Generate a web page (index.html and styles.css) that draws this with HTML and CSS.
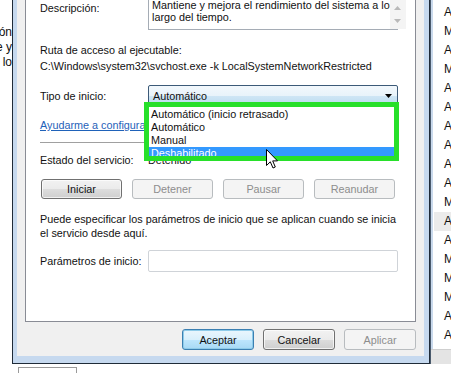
FILE: index.html
```html
<!DOCTYPE html>
<html lang="es">
<head>
  <meta charset="UTF-8">
  <meta name="viewport" content="width=device-width, initial-scale=1.0">
  <title>Propiedades del servicio</title>
  <link rel="stylesheet" href="styles.css">
</head>
<body>
  <div class="screen">
    <div class="top">
      <div class="bg-left">
        <div class="frag"><span>ón</span></div>
        <div class="frag"><span>e y</span></div>
        <div class="frag"><span>lo</span></div>
      </div>

      <div class="dialog">
        <div class="dialog-body">
          <div class="tab-panel">
            <div class="row desc-row">
              <span class="label">Descripción:</span>
              <div class="desc-box">
                <p>Mantiene y mejora el rendimiento del sistema a lo<br>largo del tiempo.</p>
                <div class="vscroll">
                  <svg width="7" height="4" viewBox="0 0 7 4"><path d="M3.5 0L7 4H0z" fill="#b9b9b9"/></svg>
                  <svg width="7" height="4" viewBox="0 0 7 4"><path d="M0 0h7L3.5 4z" fill="#b9b9b9"/></svg>
                </div>
              </div>
            </div>

            <div class="path-block">
              <div>Ruta de acceso al ejecutable:</div>
              <div>C:\Windows\system32\svchost.exe -k LocalSystemNetworkRestricted</div>
            </div>

            <div class="row start-row">
              <span class="label">Tipo de inicio:</span>
              <div class="combo">
                <span>Automático</span>
                <svg width="7" height="4" viewBox="0 0 7 4"><path d="M0 0h7L3.5 4z" fill="#000"/></svg>
              </div>
              <ul class="dropdown">
                <li>Automático (inicio retrasado)</li>
                <li>Automático</li>
                <li>Manual</li>
                <li class="selected">Deshabilitado</li>
              </ul>
              <div class="mark"></div>
              <svg class="cursor" width="12" height="20" viewBox="0 0 12 20">
                <path d="M0.5 0.5V16.5L4.3 12.8L7 19L9.3 18L6.7 11.9H11.5Z" fill="#fff" stroke="#000" stroke-width="1" stroke-linejoin="round"/>
              </svg>
            </div>

            <a class="help-link" href="#">Ayudarme a configurar las opciones de inicio del servicio.</a>
            <div class="sep"></div>

            <div class="row state-row">
              <span class="label">Estado del servicio:</span>
              <span>Detenido</span>
            </div>

            <div class="svc-buttons">
              <button class="btn">Iniciar</button>
              <button class="btn" disabled>Detener</button>
              <button class="btn" disabled>Pausar</button>
              <button class="btn" disabled>Reanudar</button>
            </div>

            <p class="hint">Puede especificar los parámetros de inicio que se aplican cuando se inicia<br>el servicio desde aquí.</p>

            <div class="row param-row">
              <span class="label">Parámetros de inicio:</span>
              <div class="text-input"></div>
            </div>
          </div>

          <div class="dialog-buttons">
            <button class="btn btn-default">Aceptar</button>
            <button class="btn">Cancelar</button>
            <button class="btn" disabled>Aplicar</button>
          </div>
        </div>
      </div>

      <div class="bg-right">
        <ul class="letters">
          <li>A</li><li>M</li><li>A</li><li>M</li><li>A</li><li>A</li>
          <li>A</li><li>A</li><li>A</li><li>A</li><li>M</li><li class="hl">A</li>
          <li>A</li><li>M</li><li>M</li><li>M</li><li>A</li><li>A</li>
        </ul>
        <div class="hscroll"></div>
      </div>
    </div>
    <div class="bottom">
      <div class="mini-tab"></div>
    </div>
  </div>
</body>
</html>
```

FILE: styles.css
```css
body {
  margin: 0;
  font-family: "Liberation Sans", Arial, sans-serif;
  font-size: 10.8px;
  color: #111;
}
.screen {
  width: 451px;
  height: 373px;
  overflow: hidden;
  background: #fff;
}
.top {
  display: flex;
  height: 364px;
}
.bg-left {
  width: 12px;
  flex: none;
  overflow: hidden;
  padding-top: 25px;
  line-height: 15px;
  font-size: 12px;
}
.frag {
  display: flex;
  justify-content: flex-end;
  white-space: nowrap;
}
.frag span {
  flex: none;
}
.dialog {
  width: 418px;
  flex: none;
  box-sizing: border-box;
  border: 1px solid #1f2b38;
  border-top: none;
  background: #c6d9ef;
  padding: 0 5px 6px 4px;
}
.dialog-body {
  background: #f0f0f0;
  padding: 0 8px 6px 8px;
}
.tab-panel {
  height: 322px;
  box-sizing: border-box;
  border: 1px solid #898c95;
  border-top: none;
  background: #fff;
  padding: 0 17px 0 14px;
}
.row {
  display: flex;
  align-items: center;
}
.label {
  width: 108px;
  flex: none;
  line-height: 16px;
}
.desc-row {
  align-items: flex-start;
}
.desc-box {
  width: 250px;
  height: 34px;
  margin-top: -4px;
  box-sizing: border-box;
  border: 1px solid #a5acb5;
  display: flex;
}
.desc-box p {
  flex: 1;
  margin: 0;
  padding: 2px 0 0 3px;
  line-height: 12px;
  white-space: nowrap;
}
.vscroll {
  width: 16px;
  flex: none;
  background: #f4f4f4;
  display: flex;
  flex-direction: column;
  align-items: center;
  justify-content: space-around;
  padding: 4px 0 2px;
  box-sizing: border-box;
}
.path-block {
  margin-top: 12px;
  line-height: 16px;
  white-space: nowrap;
}
.start-row {
  position: relative;
  margin-top: 11px;
}
.combo {
  width: 250px;
  height: 21px;
  box-sizing: border-box;
  border: 1px solid #3c5a78;
  border-radius: 2px;
  background: linear-gradient(#f2f8fc 0%, #e8f3fa 50%, #cfe6f5 51%, #bcdcf1 100%);
  display: flex;
  align-items: center;
  justify-content: space-between;
  padding: 0 5px 0 4px;
}
.dropdown {
  position: absolute;
  top: 21px;
  left: 108px;
  width: 250px;
  height: 54px;
  box-sizing: border-box;
  margin: 0;
  padding: 1px 0 0;
  list-style: none;
  background: #fff;
  border: 1px solid #646464;
}
.dropdown li {
  height: 13px;
  line-height: 13px;
  padding-left: 2px;
}
.dropdown li.selected {
  background: #3399ff;
  color: #fff;
}
.mark {
  position: absolute;
  top: 17px;
  left: 104px;
  width: 255px;
  height: 59px;
  box-sizing: border-box;
  border: 5px solid #27e02a;
}
.cursor {
  position: absolute;
  top: 64px;
  left: 226px;
}
.help-link {
  display: block;
  margin-top: 11px;
  line-height: 16px;
  color: #1f62b9;
  text-decoration: underline;
  white-space: nowrap;
}
.sep {
  margin-top: 9px;
  height: 1px;
  background: #a0a0a0;
}
.state-row {
  margin-top: 9px;
}
.state-row span {
  line-height: 16px;
}
.svc-buttons {
  display: flex;
  gap: 10px;
  margin-top: 11px;
  padding: 0 1px;
}
.svc-buttons .btn {
  width: 81px;
  height: 20px;
}
.btn {
  font-family: inherit;
  font-size: 10.8px;
  color: #111;
  padding: 0;
  border: 1px solid #707070;
  border-radius: 3px;
  background: linear-gradient(#f2f2f2 0%, #ebebeb 50%, #dddddd 51%, #cfcfcf 100%);
  box-shadow: inset 0 0 0 1px rgba(255, 255, 255, 0.7);
}
.btn:disabled {
  color: #8d8d8d;
  border-color: #b8bcbf;
  background: #f4f4f4;
  box-shadow: none;
}
.btn-default {
  border-color: #3c7fb1;
  background: linear-gradient(#eaf6fd 0%, #d9f0fc 50%, #bee6fd 51%, #a7d9f5 100%);
  box-shadow: inset 0 0 0 1px #8ecbe9;
}
.hint {
  margin: 13px 0 0;
  line-height: 14px;
  white-space: nowrap;
}
.param-row {
  margin-top: 10px;
}
.text-input {
  width: 250px;
  height: 22px;
  box-sizing: border-box;
  border: 1px solid #cfd3d8;
  border-radius: 2px;
  background: #fff;
}
.dialog-buttons {
  display: flex;
  justify-content: flex-end;
  gap: 9px;
  margin-top: 7px;
}
.dialog-buttons .btn {
  width: 72px;
  height: 21px;
}
.bg-right {
  flex: 1;
  border-left: 1px solid #4a5a6c;
  box-shadow: inset 2px 0 0 #c9d9ec;
  display: flex;
  flex-direction: column;
}
.letters {
  flex: 1;
  list-style: none;
  margin: 0;
  padding: 3px 0 0;
  font-size: 12px;
}
.letters li {
  height: 19px;
  line-height: 19px;
  padding-left: 13px;
}
.letters li.hl {
  background: #ebebeb;
  margin-left: 3px;
  padding-left: 10px;
}
.hscroll {
  height: 14px;
  background: #e4e4e4;
  border-top: 1px solid #cfcfcf;
}
.bottom {
  height: 9px;
  padding-top: 3px;
  box-sizing: border-box;
}
.mini-tab {
  margin-left: 18px;
  width: 59px;
  height: 6px;
  box-sizing: border-box;
  border: 1px solid #9a9a9a;
  border-bottom: none;
}
```
